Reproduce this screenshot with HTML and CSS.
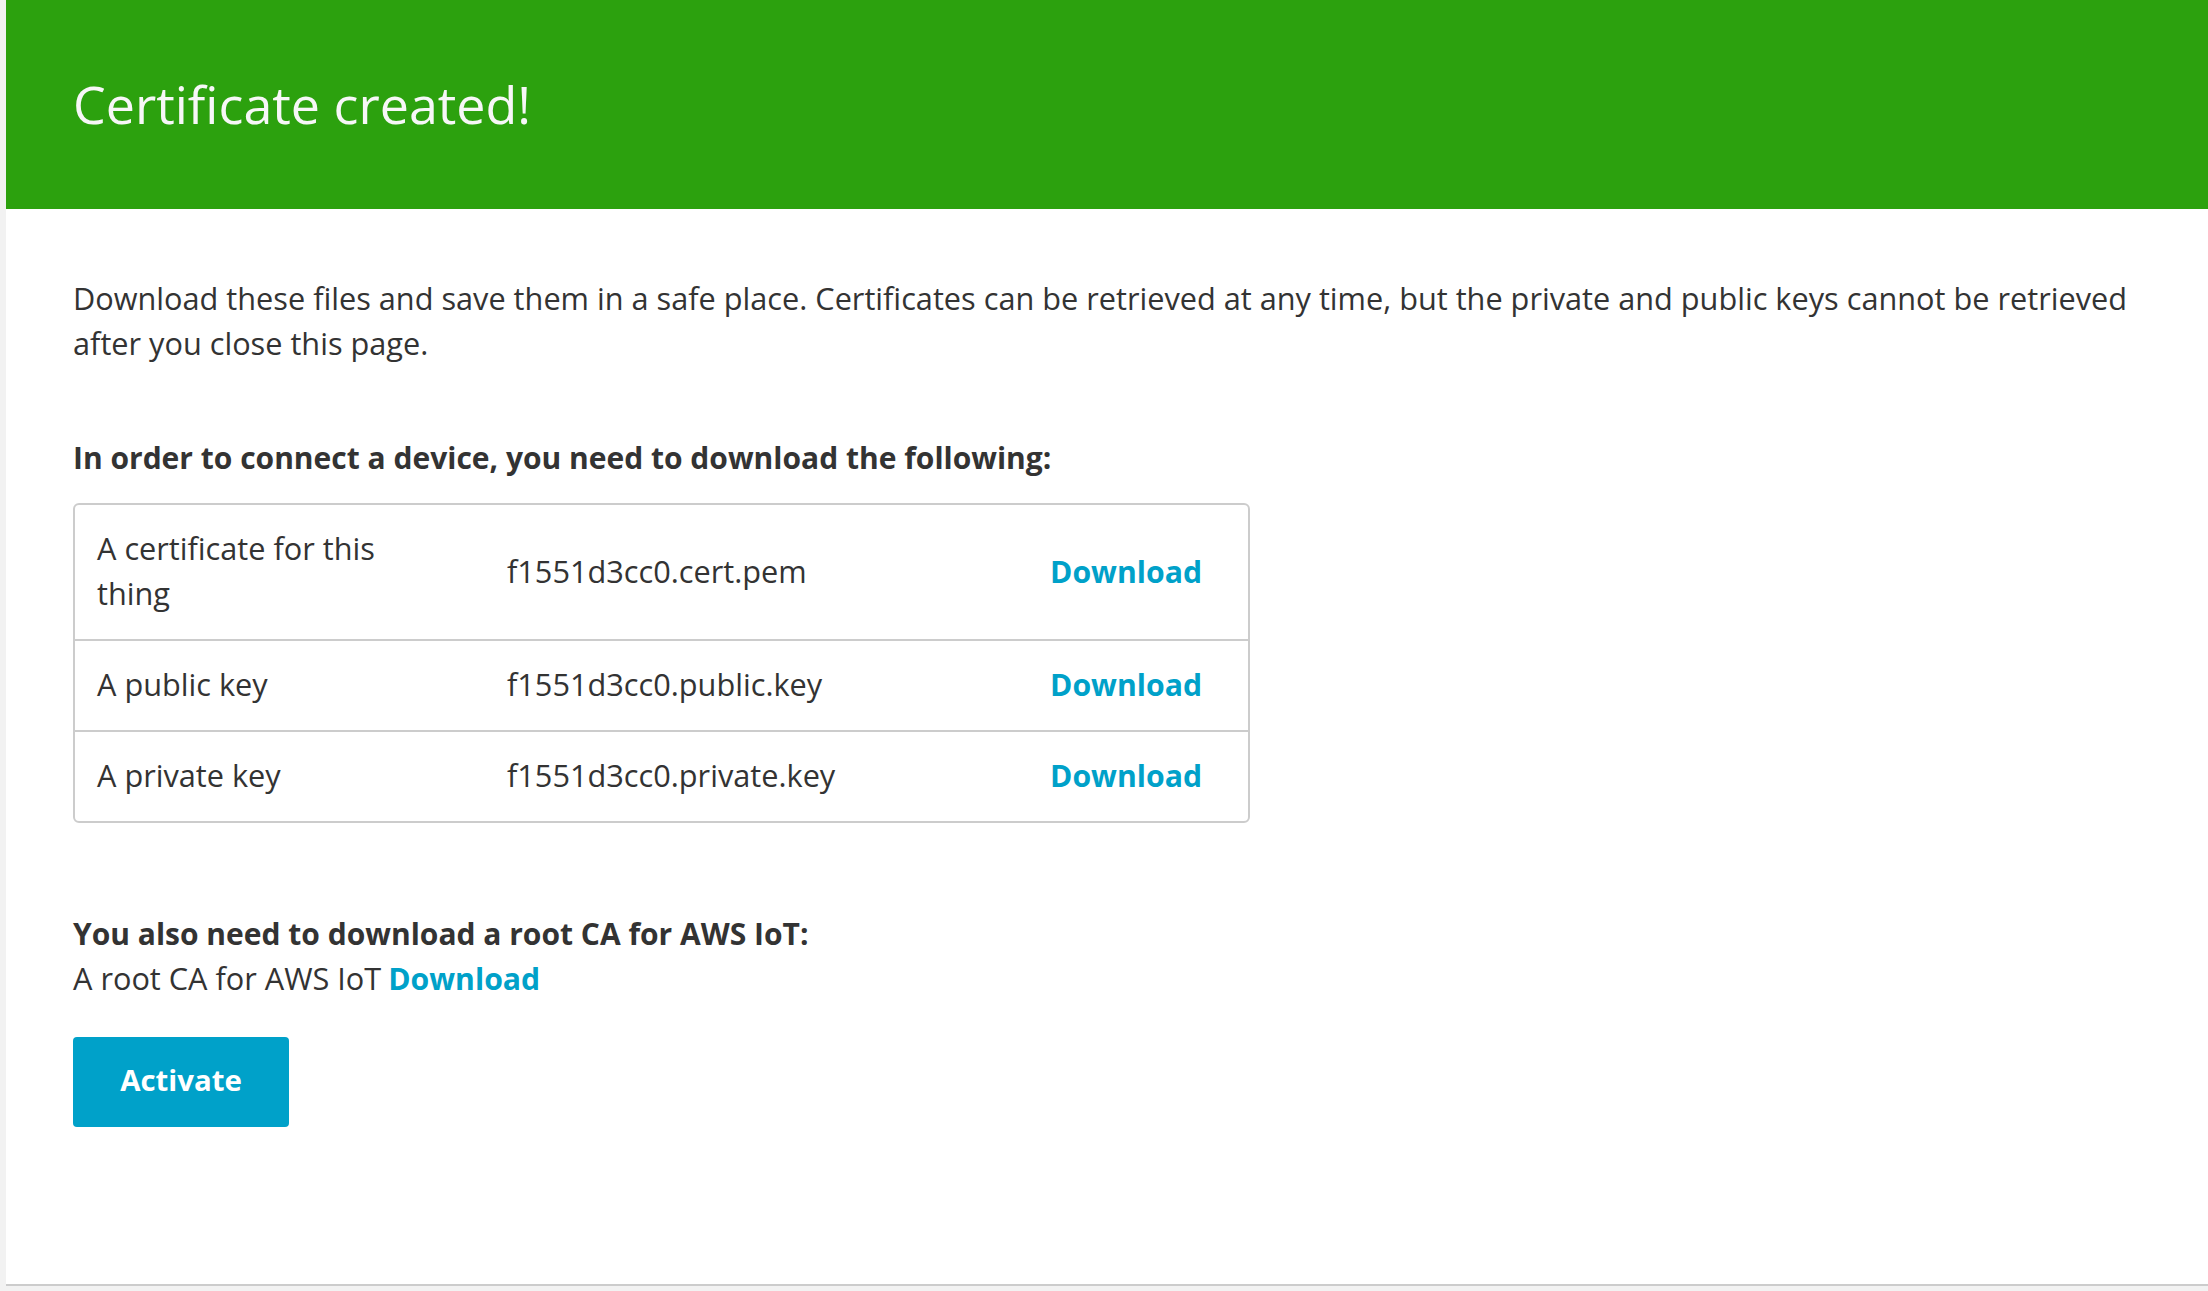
FILE: index.html
```html
<!DOCTYPE html>
<html lang="en">
<head>
<meta charset="utf-8">
<title>Certificate created!</title>
<link rel="stylesheet" href="styles.css">
</head>
<body>
<main class="card">
  <header class="banner">
    <h1 class="banner-title">Certificate created!</h1>
  </header>
  <section class="content">
    <p class="intro">Download these files and save them in a safe place. Certificates can be retrieved at any time, but the private and public keys cannot be retrieved after you close this page.</p>
    <h2 class="subhead">In order to connect a device, you need to download the following:</h2>
    <div class="files">
      <div class="file-row">
        <div class="file-label">A certificate for this thing</div>
        <div class="file-name">f1551d3cc0.cert.pem</div>
        <a class="link file-link" href="#">Download</a>
      </div>
      <div class="file-row">
        <div class="file-label">A public key</div>
        <div class="file-name">f1551d3cc0.public.key</div>
        <a class="link file-link" href="#">Download</a>
      </div>
      <div class="file-row">
        <div class="file-label">A private key</div>
        <div class="file-name">f1551d3cc0.private.key</div>
        <a class="link file-link" href="#">Download</a>
      </div>
    </div>
    <h2 class="subhead root-head">You also need to download a root CA for AWS IoT:</h2>
    <p class="root-line">A root CA for AWS IoT<a class="link root-link" href="#">Download</a></p>
    <button class="btn-primary" type="button">Activate</button>
  </section>
</main>
</body>
</html>
```
FILE: styles.css
```css
* { box-sizing: border-box; }

html, body { height: 100%; }

body {
  margin: 0;
  padding: 0 0 5px 6px;
  background: #f2f2f2;
  font-family: "Open Sans", "Noto Sans", sans-serif;
  font-size: 30.7px;
  line-height: 45px;
  color: #333333;
}

.card {
  height: 1286px;
  background: #ffffff;
  border-bottom: 2px solid #cccccc;
}

.banner {
  height: 209px;
  background: #2ca10e;
  padding: 68px 0 0 67px;
}

.banner-title {
  margin: 0;
  font-size: 52px;
  font-weight: 400;
  line-height: 71px;
  color: #f7f7f7;
}

.content {
  padding: 67px 67px 0 67px;
}

.intro {
  margin: 0;
}

.subhead {
  margin: 69px 0 0;
  font-size: 30px;
  font-weight: 700;
  line-height: 45px;
}

.files {
  margin-top: 23px;
  width: 1177px;
  border: 2px solid #cccccc;
  border-radius: 6px;
}

.file-row {
  display: grid;
  grid-template-columns: 320px 1fr auto;
  column-gap: 90px;
  align-items: center;
  padding: 21px 46px 23px 22px;
}

.file-row + .file-row {
  border-top: 2px solid #cccccc;
}

.link {
  color: #00a1c9;
  font-weight: 700;
  font-size: 30.2px;
  text-decoration: none;
}

.root-head {
  margin-top: 88px;
}

.root-line {
  margin: 0;
}

.root-link {
  margin-left: 7px;
}

.btn-primary {
  display: block;
  margin-top: 36px;
  width: 216px;
  height: 90px;
  border: 0;
  border-radius: 4px;
  background: #00a1c9;
  color: #ffffff;
  font-family: inherit;
  font-size: 29.4px;
  font-weight: 700;
  padding: 0 0 4px;
}
```
